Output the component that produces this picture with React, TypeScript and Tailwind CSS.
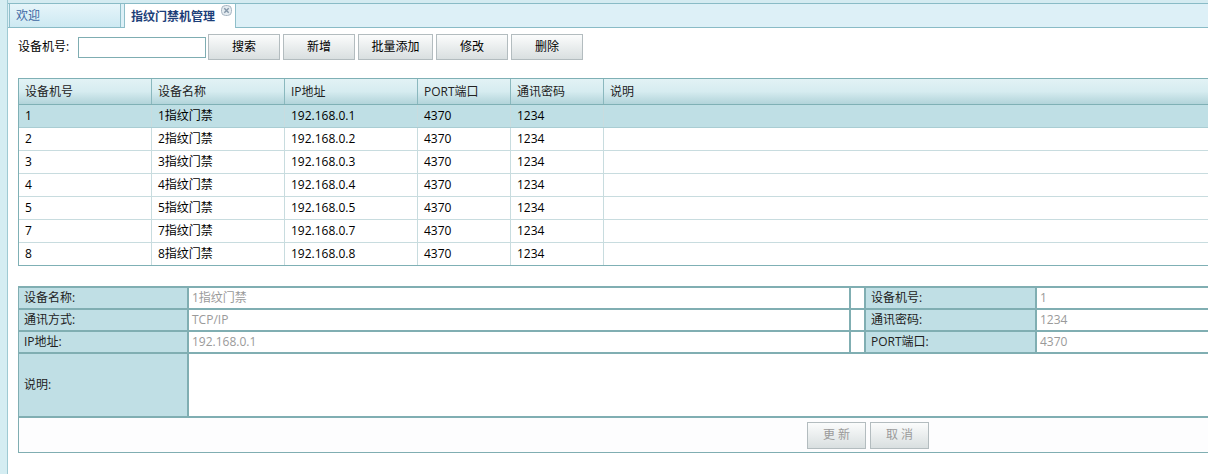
import React from "react";

const rows = [
  { id: "1", name: "1指纹门禁", ip: "192.168.0.1" },
  { id: "2", name: "2指纹门禁", ip: "192.168.0.2" },
  { id: "3", name: "3指纹门禁", ip: "192.168.0.3" },
  { id: "4", name: "4指纹门禁", ip: "192.168.0.4" },
  { id: "5", name: "5指纹门禁", ip: "192.168.0.5" },
  { id: "7", name: "7指纹门禁", ip: "192.168.0.7" },
  { id: "8", name: "8指纹门禁", ip: "192.168.0.8" },
];

const widths = ["w-[133px]", "w-[133px]", "w-[133px]", "w-[93px]", "w-[93px]", "flex-1"];
const headers = ["设备机号", "设备名称", "IP地址", "PORT端口", "通讯密码", "说明"];

const ToolButton = ({ label, wide }: { label: string; wide?: boolean }) => (
  <button
    className={`${wide ? "w-[75px]" : "w-[72px]"} h-[26px] border border-[#b3bcbf] bg-gradient-to-b from-[#fbfcfc] to-[#d9dfe0] text-[12px] text-black`}
  >
    {label}
  </button>
);

const CloseIcon = () => (
  <svg width="11" height="11" viewBox="0 0 11 11">
    <rect x="0.5" y="0.5" width="10" height="10" rx="4" fill="#e4ebf0" stroke="#a8b6c2" />
    <path d="M3.3 3.3 L7.7 7.7 M7.7 3.3 L3.3 7.7" stroke="#8496a8" strokeWidth="1.4" />
  </svg>
);

const FormRow = ({ l1, v1, l2, v2 }: { l1: string; v1: string; l2: string; v2: string }) => (
  <div className="flex h-[22px] border-b-2 border-[#80aeb2]">
    <div className="w-[170px] bg-[#c0dfe5] border-r-2 border-[#80aeb2] pl-[5px] flex items-center text-[#222]">{l1}</div>
    <div className="w-[662px] border-r-2 border-[#80aeb2] pl-[3px] flex items-center text-[#9a9a9a]">{v1}</div>
    <div className="w-[15px] border-r-2 border-[#80aeb2]" />
    <div className="w-[171px] bg-[#c0dfe5] border-r-2 border-[#80aeb2] pl-[5px] flex items-center text-[#222]">{l2}</div>
    <div className="flex-1 pl-[3px] flex items-center text-[#9a9a9a]">{v2}</div>
  </div>
);

export default function App() {
  return (
    <div
      className="flex w-[1208px] h-[474px] overflow-hidden bg-white text-[12px] text-black"
      style={{ fontFamily: '"Open Sans", "Noto Sans CJK SC", sans-serif' }}
    >
      <div className="w-[8px] shrink-0 bg-[#d5edf2] border-r border-[#9fcad3]" />
      <div className="flex-1 flex flex-col min-w-0">
        {/* tab bar */}
        <div className="h-[3px] bg-[#d4ebf1]" />
        <div className="h-[25px] flex pl-[1px] gap-[3px] bg-[#ddf0f7] border-t border-b border-[#89bbc6]">
          <div className="w-[112px] flex items-center pl-[6px] border-l border-r border-[#8fbfca] bg-gradient-to-b from-[#e6f5fa] to-[#cde9f2] text-[#3e68a3]">
            欢迎
          </div>
          <div className="w-[112px] h-[24px] -mb-px flex items-start justify-between pl-[6px] pr-[3px] border-l border-r border-[#8fbfca] bg-white">
            <span className="font-bold text-[#1c3e78] mt-[4px]">指纹门禁机管理</span>
            <span className="mt-[1px]">
              <CloseIcon />
            </span>
          </div>
        </div>

        {/* content */}
        <div className="pl-[10px] pt-[6px]">
          <div className="flex items-center h-[26px]">
            <span className="w-[60px]">设备机号:</span>
            <input className="w-[128px] h-[21px] border border-[#7fadb2] outline-none" />
            <div className="flex gap-[3px] ml-[2px]">
              <ToolButton label="搜索" />
              <ToolButton label="新增" />
              <ToolButton label="批量添加" wide />
              <ToolButton label="修改" />
              <ToolButton label="删除" />
            </div>
          </div>

          {/* grid */}
          <div className="mt-[18px] w-[1200px] border-l border-t border-[#7fb0b5]">
            <div className="flex h-[26px] border-b border-[#7fb0b5] bg-gradient-to-b from-[#e2f2f5] via-[#d6ecf0] to-[#b2d4da] text-[#222]">
              {headers.map((h, i) => (
                <div key={h} className={`${widths[i]} shrink-0 flex items-center pl-[6px] border-r border-[#8ab8be]`}>
                  {h}
                </div>
              ))}
            </div>
            {rows.map((r, idx) => (
              <div
                key={r.id}
                className={`flex h-[23px] border-b ${
                  idx === rows.length - 1 ? "border-[#7fb0b5]" : idx === 0 ? "border-[#a9cdd3]" : "border-[#c8dcdf]"
                } ${idx === 0 ? "bg-[#bfdfe5]" : "bg-white"}`}
              >
                {[r.id, r.name, r.ip, "4370", "1234", ""].map((c, i) => (
                  <div key={i} className={`${widths[i]} shrink-0 flex items-center pl-[6px] border-r border-[#c8dcdf]`}>
                    {c}
                  </div>
                ))}
              </div>
            ))}
          </div>

          {/* edit form */}
          <div className="mt-[20px] w-[1200px] border-l border-t-2 border-[#80aeb2]">
            <FormRow l1="设备名称:" v1="1指纹门禁" l2="设备机号:" v2="1" />
            <FormRow l1="通讯方式:" v1="TCP/IP" l2="通讯密码:" v2="1234" />
            <FormRow l1="IP地址:" v1="192.168.0.1" l2="PORT端口:" v2="4370" />
            <div className="flex h-[64px] border-b-2 border-[#80aeb2]">
              <div className="w-[170px] bg-[#c0dfe5] border-r-2 border-[#80aeb2] pl-[5px] flex items-center text-[#222]">
                说明:
              </div>
              <div className="flex-1" />
            </div>
            <div className="flex items-center h-[35px] pl-[788px] gap-[4px] border-b border-[#80aeb2] bg-[#fdfdfe]">
              <button className="w-[59px] h-[27px] border border-[#b3bcbf] bg-gradient-to-b from-[#fbfcfc] to-[#d9dfe0] text-[#9a9a9a]">
                更 新
              </button>
              <button className="w-[59px] h-[27px] border border-[#b3bcbf] bg-gradient-to-b from-[#fbfcfc] to-[#d9dfe0] text-[#9a9a9a]">
                取 消
              </button>
            </div>
          </div>
        </div>
      </div>
    </div>
  );
}
